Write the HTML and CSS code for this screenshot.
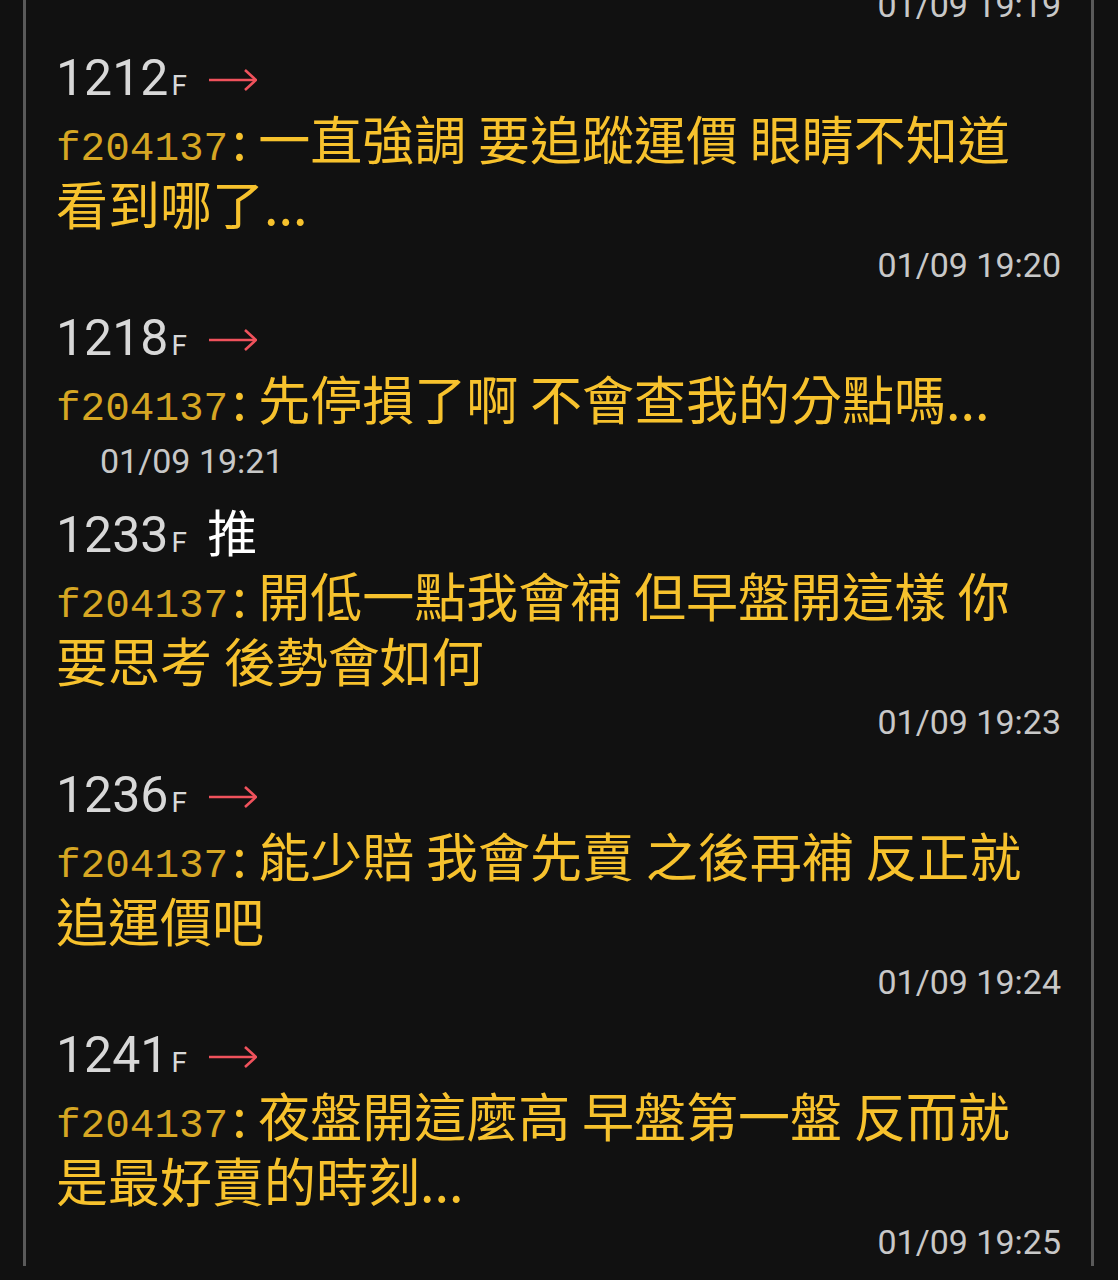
FILE: index.html
```html
<!DOCTYPE html>
<html lang="zh-Hant">
  <head>
    <meta charset="UTF-8" />
    <meta name="viewport" content="width=device-width, initial-scale=1.0" />
    <title>推文</title>
    <link rel="stylesheet" href="styles.css">
  </head>

  <body>
    <main class="thread">
      <div class="time time-top">01/09 19:19</div>

      <article class="push">
        <div class="push-head">
          <span class="floor">1212</span><span class="floor-f">F</span>
          <svg class="arrow" viewBox="0 0 48 26" aria-hidden="true">
            <path d="M0 13 H46" />
            <path d="M36 3 L47 13 L36 23" />
          </svg>
        </div>
        <p class="push-text"><span class="uid">f204137</span><span class="sep">: </span>一直強調 要追蹤運價 眼睛不知道看到哪了...</p>
        <div class="time">01/09 19:20</div>
      </article>

      <article class="push">
        <div class="push-head">
          <span class="floor">1218</span><span class="floor-f">F</span>
          <svg class="arrow" viewBox="0 0 48 26" aria-hidden="true">
            <path d="M0 13 H46" />
            <path d="M36 3 L47 13 L36 23" />
          </svg>
        </div>
        <p class="push-text"><span class="uid">f204137</span><span class="sep">: </span>先停損了啊 不會查我的分點嗎...</p>
        <div class="time time-left">01/09 19:21</div>
      </article>

      <article class="push">
        <div class="push-head">
          <span class="floor">1233</span><span class="floor-f">F</span>
          <span class="tag-push">推</span>
        </div>
        <p class="push-text"><span class="uid">f204137</span><span class="sep">: </span>開低一點我會補 但早盤開這樣 你要思考 後勢會如何</p>
        <div class="time">01/09 19:23</div>
      </article>

      <article class="push">
        <div class="push-head">
          <span class="floor">1236</span><span class="floor-f">F</span>
          <svg class="arrow" viewBox="0 0 48 26" aria-hidden="true">
            <path d="M0 13 H46" />
            <path d="M36 3 L47 13 L36 23" />
          </svg>
        </div>
        <p class="push-text"><span class="uid">f204137</span><span class="sep">: </span>能少賠 我會先賣 之後再補 反正就追運價吧</p>
        <div class="time">01/09 19:24</div>
      </article>

      <article class="push">
        <div class="push-head">
          <span class="floor">1241</span><span class="floor-f">F</span>
          <svg class="arrow" viewBox="0 0 48 26" aria-hidden="true">
            <path d="M0 13 H46" />
            <path d="M36 3 L47 13 L36 23" />
          </svg>
        </div>
        <p class="push-text"><span class="uid">f204137</span><span class="sep">: </span>夜盤開這麼高 早盤第一盤 反而就是最好賣的時刻...</p>
        <div class="time">01/09 19:25</div>
      </article>
    </main>
  </body>
</html>
```

FILE: styles.css
```css
:root {
  --bg-color: #111111;
  --rule-color: #5a5a5a;
  --floor-color: #d8d8d8;
  --time-color: #c8c8c8;
  --text-color: #f7c22d;
  --uid-color: #d6a623;
  --arrow-color: #f0525c;
}

* {
  box-sizing: border-box;
  margin: 0;
  padding: 0;
}

html,
body {
  background-color: var(--bg-color);
}

body {
  overflow: hidden;
  height: 1280px;
}

.thread {
  margin-left: 23px;
  width: 1071px;
  min-height: 1280px;
  padding: 0 30px;
  border-left: 3px solid var(--rule-color);
  border-right: 3px solid var(--rule-color);
  font-family: Roboto, "Noto Sans CJK TC", sans-serif;
}

.push {
  padding-top: 20px;
}

.push-head {
  font-size: 50px;
  line-height: 58px;
  color: var(--floor-color);
  white-space: nowrap;
}

.floor-f {
  font-size: 28px;
  line-height: 1;
  margin-left: 3px;
}

.arrow {
  width: 48px;
  height: 26px;
  margin-left: 10px;
  vertical-align: 2px;
  fill: none;
  stroke: var(--arrow-color);
  stroke-width: 2.6;
}

.tag-push {
  font-family: "Noto Sans CJK TC", sans-serif;
  line-height: 1;
  color: #ffffff;
  margin-left: 8px;
}

.push-text {
  margin-top: -2px;
  font-family: "Noto Sans CJK TC", sans-serif;
  font-size: 52px;
  line-height: 65px;
  color: var(--text-color);
  padding-right: 20px;
}

.uid {
  font-family: "Liberation Mono", monospace;
  font-size: 41px;
  line-height: 1;
  color: var(--uid-color);
  margin-right: 4px;
}

.time {
  margin-top: 6px;
  font-size: 34px;
  line-height: 48px;
  color: var(--time-color);
  text-align: right;
}

.time-top {
  margin-top: -19px;
}

.time-left {
  margin-top: 7px;
  text-align: left;
  padding-left: 44px;
}
```
